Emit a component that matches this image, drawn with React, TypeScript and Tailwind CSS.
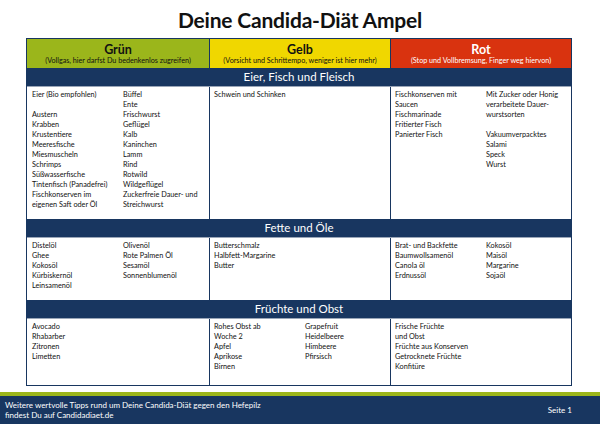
import React from "react";

type Cell = { left: string[]; right?: string[] };

interface Section {
  title: string;
  height: string;
  cells: Cell[];
}

const heads = [
  { name: "Grün", note: "(Vollgas, hier darfst Du bedenkenlos zugreifen)", cls: "bg-[#9bb61b] text-[#111]" },
  { name: "Gelb", note: "(Vorsicht und Schrittempo, weniger ist hier mehr)", cls: "bg-[#f0d700] text-[#111]" },
  { name: "Rot", note: "(Stop und Vollbremsung, Finger weg hiervon)", cls: "bg-[#d9330f] text-white" },
];

const sections: Section[] = [
  {
    title: "Eier, Fisch und Fleisch",
    height: "h-[132px]",
    cells: [
      {
        left: ["Eier (Bio empfohlen)", "", "Austern", "Krabben", "Krustentiere", "Meeresfische", "Miesmuscheln", "Schrimps", "Süßwasserfische", "Tintenfisch (Panadefrei)", "Fischkonserven im", "eigenen Saft oder Öl"],
        right: ["Büffel", "Ente", "Frischwurst", "Geflügel", "Kalb", "Kaninchen", "Lamm", "Rind", "Rotwild", "Wildgeflügel", "Zuckerfreie Dauer- und", "Streichwurst"],
      },
      { left: ["Schwein und Schinken"] },
      {
        left: ["Fischkonserven mit", "Saucen", "Fischmarinade", "Fritierter Fisch", "Panierter Fisch"],
        right: ["Mit Zucker oder Honig", "verarbeitete Dauer-", "wurstsorten", "", "Vakuumverpacktes", "Salami", "Speck", "Wurst"],
      },
    ],
  },
  {
    title: "Fette und Öle",
    height: "h-[62px]",
    cells: [
      { left: ["Distelöl", "Ghee", "Kokosöl", "Kürbiskernöl", "Leinsamenöl"], right: ["Olivenöl", "Rote Palmen Öl", "Sesamöl", "Sonnenblumenöl"] },
      { left: ["Butterschmalz", "Halbfett-Margarine", "Butter"] },
      { left: ["Brat- und Backfette", "Baumwollsamenöl", "Canola öl", "Erdnussöl"], right: ["Kokosöl", "Maisöl", "Margarine", "Sojaöl"] },
    ],
  },
  {
    title: "Früchte und Obst",
    height: "h-[66px]",
    cells: [
      { left: ["Avocado", "Rhabarber", "Zitronen", "Limetten"] },
      { left: ["Rohes Obst ab", "Woche 2", "Apfel", "Aprikose", "Birnen"], right: ["Grapefruit", "Heidelbeere", "Himbeere", "Pfirsisch"] },
      { left: ["Frische Früchte", "und Obst", "Früchte aus Konserven", "Getrocknete Früchte", "Konfitüre"] },
    ],
  },
];

const Lines = ({ items }: { items: string[] }) => (
  <div className="flex flex-col">
    {items.map((t, i) => (
      <div key={i} className="h-[10px] leading-[10px] whitespace-nowrap">
        {t || "\u00a0"}
      </div>
    ))}
  </div>
);

const BodyCell = ({ cell, idx }: { cell: Cell; idx: number }) => (
  <div className={`flex pt-[3px] ${idx === 0 ? "pl-[5px]" : "pl-[4px] border-l border-[#183660]"}`}>
    <div className="w-[91px] shrink-0">
      <Lines items={cell.left} />
    </div>
    {cell.right && <Lines items={cell.right} />}
  </div>
);

export default function App() {
  return (
    <div className="w-[600px] h-[424px] bg-white flex flex-col text-[#1a1a1a]" style={{ fontFamily: "Lato, 'Liberation Sans', sans-serif" }}>
      <div className="h-[38px] flex items-center justify-center pt-[1px]">
        <h1 className="text-[21px] font-bold text-[#111] tracking-[-0.2px]">Deine Candida-Diät Ampel</h1>
      </div>

      <div className="ml-[26px] w-[546px] border border-[#183660]">
        <div className="grid grid-cols-[182px_181px_181px] h-[29px]">
          {heads.map((h, i) => (
            <div key={h.name} className={`${h.cls} flex flex-col items-center justify-center ${i > 0 ? "border-l border-[#183660]" : ""}`}>
              <div className="text-[12.5px] font-bold leading-[13px]">{h.name}</div>
              <div className="text-[7.2px] leading-[9px] whitespace-nowrap">{h.note}</div>
            </div>
          ))}
        </div>

        {sections.map((s) => (
          <div key={s.title}>
            <div className="h-[19px] bg-[#183660] border-b border-[#9aa6b8] flex items-center justify-center text-white text-[11.5px] leading-none">
              {s.title}
            </div>
            <div className={`grid grid-cols-[182px_181px_181px] ${s.height} text-[7.3px] text-[#111]`}>
              {s.cells.map((c, i) => (
                <BodyCell key={i} cell={c} idx={i} />
              ))}
            </div>
          </div>
        ))}
      </div>

      <div className="mt-auto">
        <div className="h-[4px] bg-[#9bb61b]" />
        <div className="h-[28px] bg-[#183660] text-white text-[8px] leading-[10px] flex items-center justify-between pl-[5px] pr-[28px]">
          <div>
            <div>Weitere wertvolle Tipps rund um Deine Candida-Diät gegen den Hefepilz</div>
            <div>findest Du auf Candidadiaet.de</div>
          </div>
          <div>Seite 1</div>
        </div>
      </div>
    </div>
  );
}
